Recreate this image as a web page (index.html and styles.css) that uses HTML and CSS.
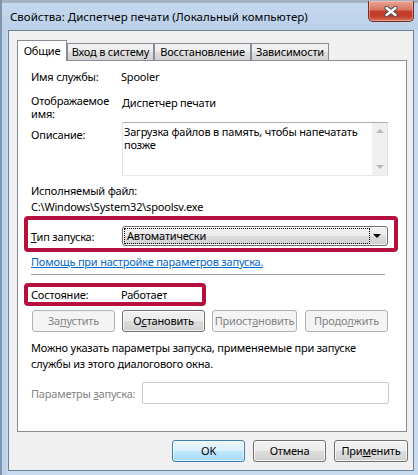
FILE: index.html
```html
<!DOCTYPE html>
<html lang="ru">
<head>
<meta charset="utf-8">
<title>Свойства: Диспетчер печати</title>
<link rel="stylesheet" href="styles.css">
</head>
<body>
<div class="window">
  <div class="titlebar">
    <span class="title">Свойства: Диспетчер печати (Локальный компьютер)</span>
    <div class="close">
      <svg width="14" height="11" viewBox="0 0 14 11">
        <path d="M2.5 2 L11.5 9 M11.5 2 L2.5 9" stroke="#4b4b55" stroke-width="4.2" stroke-linecap="round"/>
        <path d="M2.5 2 L11.5 9 M11.5 2 L2.5 9" stroke="#ffffff" stroke-width="2.4" stroke-linecap="round"/>
      </svg>
    </div>
  </div>
  <div class="client">
    <div class="tabs">
      <div class="tab active">Общие</div>
      <div class="tab t2">Вход в систему</div>
      <div class="tab t3">Восстановление</div>
      <div class="tab t4">Зависимости</div>
    </div>
    <div class="panel">
      <div class="row">
        <span>Имя службы:</span>
        <span>Spooler</span>
      </div>
      <div class="row row-display">
        <span class="tight wrap">Отображаемое имя:</span>
        <span class="tight shift">Диспетчер печати</span>
      </div>
      <div class="row row-desc">
        <span class="desc-label">Описание:</span>
        <div class="textbox">
          <div class="textbox-text">Загрузка файлов в память, чтобы напечатать позже</div>
          <div class="scrollbar">
            <span class="arrow up"></span>
            <span class="arrow down"></span>
          </div>
        </div>
      </div>
      <div class="line exe-label">Исполняемый файл:</div>
      <div class="line exe-path">C:\Windows\System32\spoolsv.exe</div>
      <div class="mark mark-start">
        <div class="row">
          <span><u>Т</u>ип запуска:</span>
          <div class="combo">
            <span class="combo-focus">Автоматически</span>
            <span class="combo-arrow"></span>
          </div>
        </div>
      </div>
      <a class="link" href="#">Помощь при настройке параметров запуска.</a>
      <div class="separator"></div>
      <div class="mark mark-state">
        <div class="row">
          <span>Состояние:</span>
          <span>Работает</span>
        </div>
      </div>
      <div class="svc-buttons">
        <button class="btn disabled w83">За<u>п</u>устить</button>
        <button class="btn w83">О<u>с</u>тановить</button>
        <button class="btn disabled w85">Приост<u>а</u>новить</button>
        <button class="btn disabled w83">Продо<u>л</u>жить</button>
      </div>
      <div class="note">Можно указать параметры запуска, применяемые при запуске<br>службы из этого диалогового окна.</div>
      <div class="params">
        <span class="params-label">Параметры <u>з</u>апуска:</span>
        <div class="params-input"></div>
      </div>
    </div>
    <div class="dialog-buttons">
      <button class="btn default w73">OK</button>
      <button class="btn w73">Отмена</button>
      <button class="btn w74">При<u>м</u>енить</button>
    </div>
  </div>
</div>
</body>
</html>
```
FILE: styles.css
```css
* { box-sizing: border-box; }
html, body { margin: 0; padding: 0; }
body {
  width: 418px;
  height: 475px;
  overflow: hidden;
  font-family: "Noto Sans", "Open Sans", sans-serif;
  font-size: 11px;
  letter-spacing: -0.2px;
  color: #000;
  background: #b9d0e8;
}
.window {
  width: 418px;
  height: 475px;
  display: flex;
  flex-direction: column;
  border-left: 2px solid #8193a8;
  background: linear-gradient(90deg, #c3d8ee 0, #b7cee8 3px, #c6dbf0 6px);
}
.titlebar {
  height: 30px;
  display: flex;
  align-items: flex-start;
  justify-content: space-between;
  background: linear-gradient(#a3b3c4 0, #a3b3c4 3px, #c4d8ee 3px, #bbd1ea 100%);
}
.title {
  margin: 9px 0 0 8px;
  font-size: 11.5px;
  letter-spacing: 0;
  line-height: 15px;
  color: #000;
}
.close {
  width: 46px;
  height: 21px;
  margin: 1px 4px 0 0;
  border: 1px solid #6e2f2a;
  border-top: none;
  border-radius: 0 0 5px 5px;
  background: linear-gradient(#e9a696 0, #d8735f 45%, #c4402c 50%, #c23a27 75%, #d7735b 100%);
  box-shadow: inset 0 0 0 1px rgba(255, 210, 200, 0.45);
  display: flex;
  align-items: center;
  justify-content: center;
}
.close svg { display: block; margin-top: 1px; }
.client {
  margin: 0 4px 4px 6px;
  flex: 1;
  background: #f0f0f0;
  border: 1px solid #6f8296;
  padding: 9px 5px 0 8px;
  display: flex;
  flex-direction: column;
}
.tabs {
  height: 20px;
  display: flex;
  align-items: flex-end;
}
.tab {
  height: 17px;
  border: 1px solid #898c95;
  border-bottom: none;
  background: linear-gradient(#f3f3f3 0, #ebebeb 50%, #dedede 50%, #d3d3d3 100%);
  text-align: center;
  line-height: 16px;
  white-space: nowrap;
}
.tab.active {
  height: 21px;
  width: 50px;
  margin-bottom: -1px;
  background: #fff;
  position: relative;
  z-index: 1;
  line-height: 19px;
}
.t2 { width: 87px; }
.t3 { width: 97px; }
.t4 { width: 78px; }
.panel {
  height: 372px;
  width: 390px;
  background: #fff;
  border: 1px solid #898c95;
  padding: 8px 0 0 13px;
  display: flex;
  flex-direction: column;
  align-items: flex-start;
}
.row {
  display: grid;
  grid-template-columns: 90px auto;
  line-height: 15px;
  align-items: start;
}
.row-display { margin-top: 10px; }
.tight { line-height: 13px; }
.wrap { width: 80px; }
.shift { padding-top: 2px; margin-left: 1px; }
.row-desc { margin-top: 2px; }
.desc-label { padding-top: 5px; }
.textbox {
  margin-left: 1px;
  width: 266px;
  height: 54px;
  border: 1px solid;
  border-color: #abadb3 #dbdfe6 #e3e9ef #e2e3ea;
  background: #fff;
  display: flex;
}
.textbox-text {
  flex: 1;
  padding: 2px 0 0 1px;
  line-height: 13px;
}
.scrollbar {
  width: 15px;
  background: #f0f0f0;
  display: flex;
  flex-direction: column;
  justify-content: space-between;
  align-items: center;
  padding: 6px 0 6px;
}
.arrow {
  width: 0;
  height: 0;
  border-left: 4px solid transparent;
  border-right: 4px solid transparent;
}
.arrow.up { border-bottom: 4px solid #b9b9b9; }
.arrow.down { border-top: 4px solid #b9b9b9; }
.line { line-height: 15px; }
.exe-label { margin-top: 7px; }
.exe-path { margin-top: 1px; }
.mark {
  border: 4px solid #b5103e;
  border-radius: 4px;
  margin-left: -7px;
  padding-left: 3px;
}
.mark-start {
  margin-top: 2px;
  width: 374px;
  height: 36px;
  padding-top: 6px;
}
.mark-start .row { align-items: center; }
.combo {
  margin-left: 1px;
  width: 266px;
  height: 20px;
  border: 1px solid #707070;
  border-radius: 3px;
  background: linear-gradient(#f2f2f2 0, #ebebeb 50%, #dddddd 50%, #cfcfcf 100%);
  box-shadow: inset 0 0 0 1px rgba(255, 255, 255, 0.7);
  display: flex;
  align-items: center;
  padding: 0 6px 0 1px;
}
.combo-focus {
  width: 246px;
  height: 16px;
  border: 1px dotted #000;
  line-height: 14px;
  padding-left: 2px;
}
.combo-arrow {
  margin-left: auto;
  width: 0;
  height: 0;
  border-left: 4px solid transparent;
  border-right: 4px solid transparent;
  border-top: 4px solid #000;
}
.link {
  margin-top: 2px;
  line-height: 15px;
  color: #0066cc;
  text-decoration: underline;
}
.separator {
  margin-top: 5px;
  width: 354px;
  height: 1px;
  background: #a0a0a0;
}
.mark-state {
  margin-top: 8px;
  width: 182px;
  height: 23px;
}
.svc-buttons {
  margin-top: 4px;
  margin-left: 1px;
  display: flex;
  gap: 7px;
}
.btn {
  height: 22px;
  padding: 0;
  font-family: inherit;
  font-size: 11px;
  letter-spacing: -0.2px;
  color: #000;
  border: 1px solid #707070;
  border-radius: 3px;
  background: linear-gradient(#f2f2f2 0, #ebebeb 50%, #dddddd 50%, #cfcfcf 100%);
  box-shadow: inset 0 0 0 1px rgba(255, 255, 255, 0.75);
  line-height: 18px;
}
.btn.disabled {
  color: #838383;
  border-color: #adb2b5;
  background: #f4f4f4;
  box-shadow: none;
}
.btn.default {
  border-color: #3c7fb1;
  background: linear-gradient(#eaf6fd 0, #d9f0fc 50%, #bee6fd 50%, #a7d9f5 100%);
  box-shadow: inset 0 0 0 1px rgba(255, 255, 255, 0.6);
}
.svc-buttons .btn + .btn:last-child { margin-left: 1px; }
.w83 { width: 83px; }
.w85 { width: 85px; }
.w73 { width: 73px; }
.w74 { width: 74px; }
.note {
  margin-top: 8px;
  line-height: 16px;
}
.params {
  margin-top: 10px;
  display: flex;
  align-items: center;
}
.params-label {
  width: 111px;
  color: #838383;
  line-height: 15px;
}
.params-input {
  width: 247px;
  height: 22px;
  border: 1px solid #c8c9cc;
  border-radius: 2px;
  background: #fff;
}
.dialog-buttons {
  margin-top: 8px;
  display: flex;
  justify-content: flex-end;
  gap: 8px;
}
```
